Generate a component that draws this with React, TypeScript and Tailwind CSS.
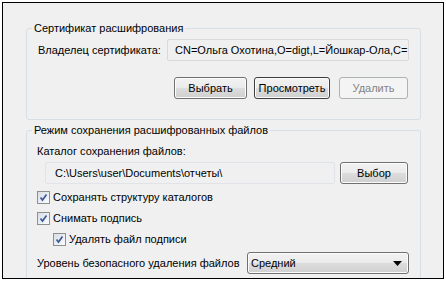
const font = { fontFamily: '"Liberation Sans", Arial, sans-serif' }

function Button({ label, w, disabled, focused }: { label: string; w: string; disabled?: boolean; focused?: boolean }) {
  if (disabled) {
    return (
      <div className={`${w} h-[22px] rounded-[3px] border border-[#adb2b5] bg-[#f4f4f4] text-[#838383] flex items-center justify-center`}>
        {label}
      </div>
    )
  }
  return (
    <div
      className={`${w} h-[22px] rounded-[3px] border ${focused ? 'border-[#3d3d3d]' : 'border-[#707070]'} bg-[linear-gradient(#f2f2f2_0%,#ebebeb_50%,#dddddd_50%,#cfcfcf_100%)] shadow-[inset_0_0_0_1px_#fcfcfc] flex items-center justify-center text-black`}
    >
      {label}
    </div>
  )
}

function Check({ label, indent }: { label: string; indent?: boolean }) {
  return (
    <div className={`flex items-center h-[21px] ${indent ? 'pl-[16px]' : ''}`}>
      <span className="w-[13px] h-[13px] border border-[#8e8f8f] bg-[linear-gradient(135deg,#d8dde6,#fbfcfd)] flex items-center justify-center shrink-0">
        <svg width="9" height="9" viewBox="0 0 9 9">
          <path d="M1.5 4.5 L3.5 7 L7.5 1.5" fill="none" stroke="#3c5a96" strokeWidth="1.7" />
        </svg>
      </span>
      <span className="ml-[3px]">{label}</span>
    </div>
  )
}

export default function App() {
  return (
    <div className="w-[446px] h-[281px] bg-white pt-[2px] pl-[2px] text-[11px] leading-[15px] text-black whitespace-nowrap" style={font}>
      <div className="w-[442px] h-[277px] border border-black bg-[#f0f0f0] overflow-hidden flex flex-col">
        <div className="relative ml-[23px] mt-[25px] w-[395px] h-[92px] border border-[#d5dfe5] rounded-[3px] shrink-0 pt-[10px] pl-[11px] pr-[10px]">
          <span className="absolute top-[-8px] left-[5px] px-[2px] bg-[#f0f0f0]">Сертификат расшифрования</span>
          <div className="flex items-center">
            <span className="w-[129px]">Владелец сертификата:</span>
            <div className="w-[242px] h-[22px] border border-[#d9d9d9] rounded-[2px] flex items-center pl-[7px] overflow-hidden">
              CN=Ольга Охотина,O=digt,L=Йошкар-Ола,C=
            </div>
          </div>
          <div className="flex justify-end mt-[16px] mr-[2px] gap-[7px]">
            <Button label="Выбрать" w="w-[73px]" />
            <Button label="Просмотреть" w="w-[76px]" focused />
            <div className="ml-[2px]">
              <Button label="Удалить" w="w-[69px]" disabled />
            </div>
          </div>
        </div>
        <div className="relative ml-[23px] mt-[10px] w-[395px] h-[160px] border border-[#d5dfe5] rounded-[3px] shrink-0 pt-[13px] pl-[10px] pr-[10px]">
          <span className="absolute top-[-8px] left-[5px] px-[2px] bg-[#f0f0f0]">Режим сохранения расшифрованных файлов</span>
          <div>Каталог сохранения файлов:</div>
          <div className="flex items-center mt-[3px] pl-[8px]">
            <div className="w-[290px] h-[22px] border border-[#e0e4e8] rounded-[2px] flex items-center pl-[9px] overflow-hidden">
              C:\Users\user\Documents\отчеты\
            </div>
            <div className="ml-[5px]">
              <Button label="Выбор" w="w-[68px]" />
            </div>
          </div>
          <div className="mt-[3px]">
            <Check label="Сохранять структуру каталогов" />
            <Check label="Снимать подпись" />
            <Check label="Удалять файл подписи" indent />
          </div>
          <div className="flex items-center mt-[2px]">
            <span className="w-[210px]">Уровень безопасного удаления файлов</span>
            <div className="w-[162px] h-[22px] rounded-[3px] border border-[#707070] bg-[linear-gradient(#f2f2f2_0%,#ebebeb_50%,#dddddd_50%,#cfcfcf_100%)] shadow-[inset_0_0_0_1px_#fcfcfc] flex items-center pl-[3px] pr-[6px] justify-between">
              <span>Средний</span>
              <svg width="9" height="5" viewBox="0 0 9 5">
                <path d="M0 0 H9 L4.5 5 Z" fill="#000" />
              </svg>
            </div>
          </div>
        </div>
      </div>
    </div>
  )
}
